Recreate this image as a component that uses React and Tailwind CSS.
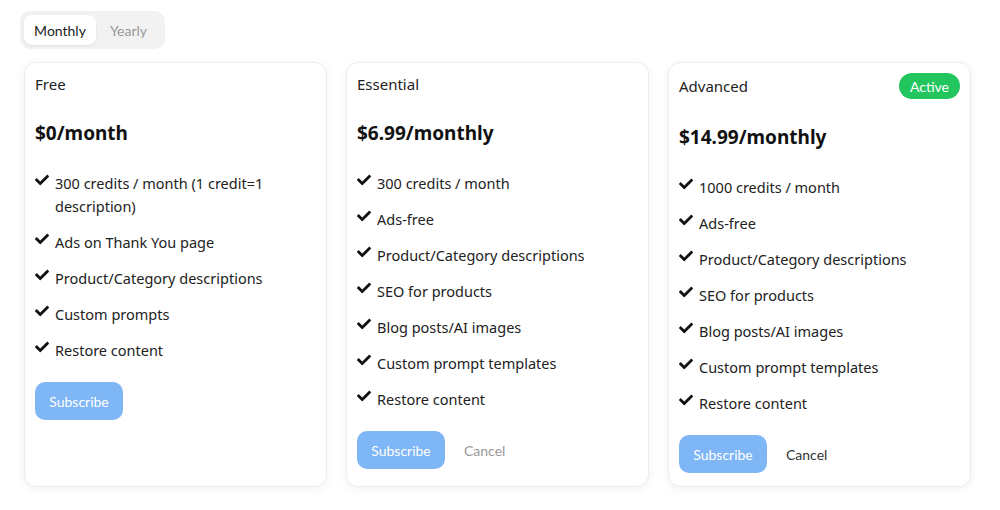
import { FaCheck } from 'react-icons/fa';

const plans = [
  {
    name: 'Free',
    price: '$0/month',
    features: [
      '300 credits / month (1 credit=1 description)',
      'Ads on Thank You page',
      'Product/Category descriptions',
      'Custom prompts',
      'Restore content',
    ],
    cancel: null,
  },
  {
    name: 'Essential',
    price: '$6.99/monthly',
    features: [
      '300 credits / month',
      'Ads-free',
      'Product/Category descriptions',
      'SEO for products',
      'Blog posts/AI images',
      'Custom prompt templates',
      'Restore content',
    ],
    cancel: 'muted',
  },
  {
    name: 'Advanced',
    price: '$14.99/monthly',
    active: true,
    features: [
      '1000 credits / month',
      'Ads-free',
      'Product/Category descriptions',
      'SEO for products',
      'Blog posts/AI images',
      'Custom prompt templates',
      'Restore content',
    ],
    cancel: 'dark',
  },
];

function PlanCard({ plan }) {
  return (
    <div className="flex flex-col rounded-xl border border-[#ececec] bg-white px-[10px] pt-[10px] shadow-[0_2px_10px_rgba(0,0,0,0.06)]">
      <div className={`flex items-center justify-between ${plan.active ? 'h-[26px]' : 'h-[22px]'}`}>
        <span className="text-[15px] leading-[22px] text-[#222]">{plan.name}</span>
        {plan.active && (
          <span className="flex h-[26px] items-center rounded-full bg-[#22c55e] px-[11px] font-['Lato'] text-[14px] text-white">
            Active
          </span>
        )}
      </div>
      <div className="mt-[24px] text-[19px] font-bold leading-[28px] text-[#111]">{plan.price}</div>
      <ul className="mt-[25px] flex flex-col gap-[13px]">
        {plan.features.map((f) => (
          <li key={f} className="flex items-start gap-[6px] text-[14.5px] leading-[23px] text-[#222]">
            <FaCheck className="mt-[1px] h-[14px] w-[14px] shrink-0 text-[#111]" />
            <span>{f}</span>
          </li>
        ))}
      </ul>
      <div className="mt-[20px] flex items-center gap-[19px] font-['Lato']">
        <button className="h-[38px] w-[88px] rounded-[10px] bg-[#7fb6f6] text-[14px] text-white">Subscribe</button>
        {plan.cancel && (
          <button className={`text-[14px] ${plan.cancel === 'dark' ? 'text-[#333]' : 'text-[#999]'}`}>Cancel</button>
        )}
      </div>
    </div>
  );
}

export default function App() {
  return (
    <div className="min-h-[510px] bg-white pl-[20px] pt-[11px] font-['Noto_Sans',sans-serif]">
      <div className="flex w-fit items-center rounded-[10px] bg-[#f2f2f2] p-[4px] font-['Lato']">
        <button className="h-[30px] w-[72px] rounded-[8px] bg-white text-[14px] text-[#222] shadow-[0_1px_3px_rgba(0,0,0,0.08)]">
          Monthly
        </button>
        <button className="h-[30px] w-[65px] text-[14px] text-[#999]">Yearly</button>
      </div>
      <div className="mt-[13px] ml-[4px] grid h-[425px] grid-cols-[303px_303px_303px] gap-[19px]">
        {plans.map((p) => (
          <PlanCard key={p.name} plan={p} />
        ))}
      </div>
    </div>
  );
}
